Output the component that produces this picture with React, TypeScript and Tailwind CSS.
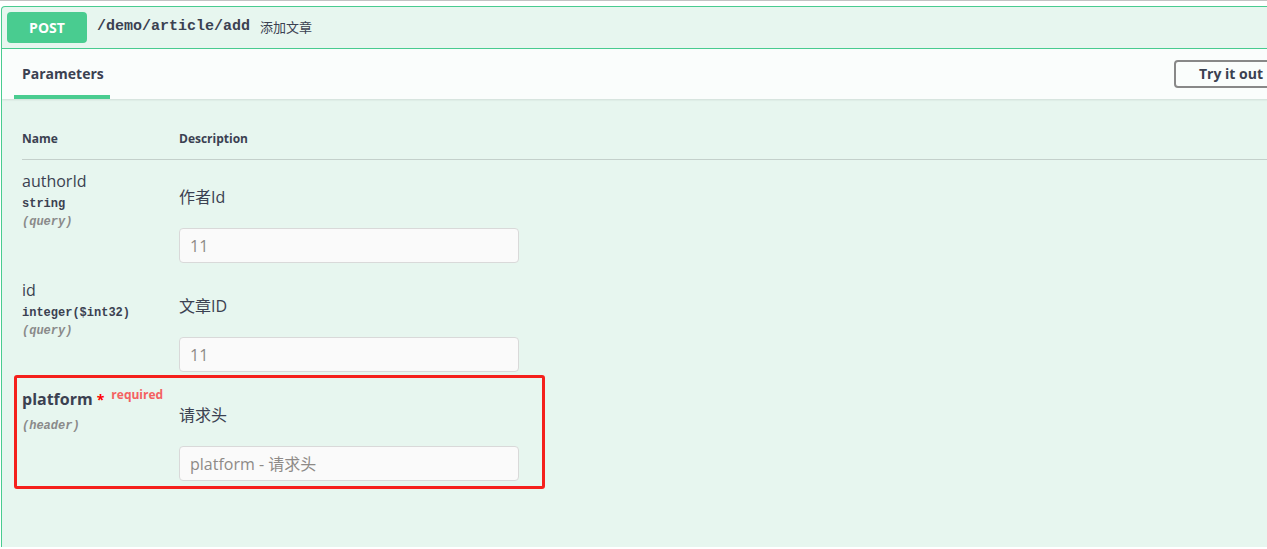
import React from "react";

const sans = "font-['Open_Sans','Noto_Sans_CJK_SC',sans-serif]";
const mono = "font-['Liberation_Mono','Noto_Sans_CJK_SC',monospace]";

type Param = {
  name: string;
  type?: string;
  loc: string;
  desc: string;
  placeholder: string;
  required?: boolean;
};

const params: Param[] = [
  { name: "authorId", type: "string", loc: "(query)", desc: "作者Id", placeholder: "11" },
  { name: "id", type: "integer($int32)", loc: "(query)", desc: "文章ID", placeholder: "11" },
  { name: "platform", loc: "(header)", desc: "请求头", placeholder: "platform - 请求头", required: true },
];

function ParamRow({ p }: { p: Param }) {
  return (
    <div className="relative flex h-[109px]">
      {p.required && (
        <div className="pointer-events-none absolute left-[-8px] top-[-3px] h-[114px] w-[531px] rounded-[3px] border-[3px] border-[#f5201c]" />
      )}
      <div className="w-[157px] pt-[10px]">
        {p.required ? (
          <div className="flex items-start">
            <span className="text-[16px] font-bold leading-[22px]">platform</span>
            <span className="ml-[4px] mt-[3px] text-[14px] font-bold leading-[18px] text-[#ff0000]">*</span>
            <span className="ml-[7px] mt-[-2px] text-[12px] font-bold leading-[18px] text-[#f46161]">required</span>
          </div>
        ) : (
          <div className="text-[16px] leading-[22px]">{p.name}</div>
        )}
        {p.type && (
          <div className={`${mono} mt-[3px] text-[12px] font-bold leading-[18px]`}>{p.type}</div>
        )}
        <div
          className={`${mono} text-[12px] font-bold italic leading-[18px] text-[#8a8a8a] ${
            p.required ? "mt-[7px]" : ""
          }`}
        >
          {p.loc}
        </div>
      </div>
      <div className="flex flex-col pt-[26px]">
        <div className="text-[16px] leading-[22px]">{p.desc}</div>
        <input
          type="text"
          placeholder={p.placeholder}
          className={`${sans} mt-[20px] h-[35px] w-[340px] rounded-[4px] border border-[#d9d9d9] bg-[#fafafa] px-[10px] text-[16px] text-[#3b4151] outline-none placeholder:text-[#8e8a87]`}
        />
      </div>
    </div>
  );
}

export default function App() {
  return (
    <div className={`${sans} h-[549px] w-full overflow-hidden border-t border-[#c3c3c3] bg-white pt-[5px] text-[#3b4151]`}>
      <div className="ml-[1px] w-[1300px] overflow-hidden rounded-tl-[4px] border border-b-0 border-[#49cc90] bg-[#e7f6ef]">
        <div className="flex h-[42px] items-start border-b border-[#49cc90] pl-[5px] pt-[5px]">
          <div className="flex h-[31px] w-[80px] items-center justify-center rounded-[4px] bg-[#49cc90] text-[14px] font-bold text-white">
            POST
          </div>
          <div className={`${mono} ml-[10px] mt-[4px] text-[15px] font-bold leading-[22px]`}>
            /demo/article/add
          </div>
          <div className="ml-[10px] mt-[5px] text-[13px] leading-[20px]">添加文章</div>
        </div>
        <div className="flex h-[50px] items-stretch bg-white/80 pl-[12px] shadow-[0_1px_2px_rgba(0,0,0,0.1)]">
          <div className="flex w-[96px] flex-col">
            <div className="flex flex-1 items-center px-[8px] pt-[2px] text-[14px] font-bold">Parameters</div>
            <div className="h-[4px] bg-[#49cc90]" />
          </div>
          <div className="ml-auto mr-[12px] mt-[11px]">
            <button className="h-[28px] rounded-[4px] border-2 border-[#888888] bg-transparent px-[23px] text-[14px] font-bold leading-[20px]">
              Try it out
            </button>
          </div>
        </div>
        <div className="h-[448px] pl-[20px] pt-[30px]">
          <div className="flex h-[31px] items-start border-b border-[#c4d0cb] pt-[1px] text-[12px] font-bold leading-[18px]">
            <div className="w-[157px]">Name</div>
            <div>Description</div>
          </div>
          {params.map((p) => (
            <ParamRow key={p.name} p={p} />
          ))}
        </div>
      </div>
    </div>
  );
}
